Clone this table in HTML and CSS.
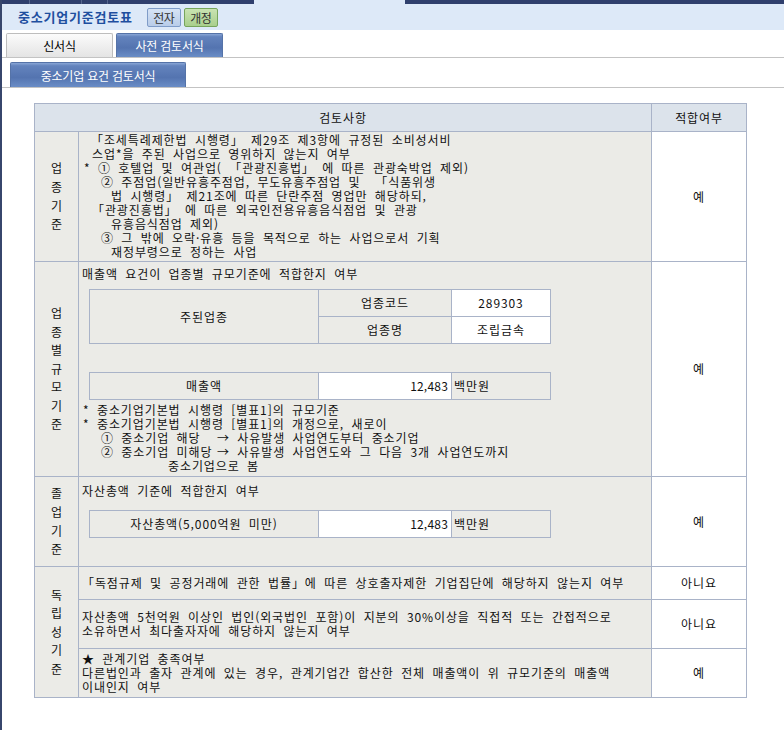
FILE: index.html
```html
<!DOCTYPE html>
<html lang="ko">
<head>
<meta charset="utf-8">
<title>중소기업기준검토표</title>
<link rel="stylesheet" href="styles.css">
</head>
<body>
<div class="frame">
  <div class="topbar">
    <div class="tb-seg tb-a"></div>
    <div class="tb-seg tb-b"></div>
    <div class="tb-seg tb-c"></div>
    <div class="tb-seg tb-d"></div>
    <div class="tb-gap"></div>
    <div class="tb-seg tb-e"></div>
  </div>
  <div class="titlebar">
    <h1 class="title">중소기업기준검토표</h1>
    <span class="btn btn-blue">전자</span>
    <span class="btn btn-green">개정</span>
  </div>
  <div class="tabs tabs-main">
    <span class="tab tab-off">신서식</span>
    <span class="tab tab-on">사전 검토서식</span>
  </div>
  <div class="tabs tabs-sub">
    <span class="tab tab-on tab-wide">중소기업 요건 검토서식</span>
  </div>
  <div class="content">
    <table class="review">
      <colgroup><col class="c-label"><col class="c-body"><col class="c-result"></colgroup>
      <thead>
        <tr class="r-head"><th colspan="2">검토사항</th><th>적합여부</th></tr>
      </thead>
      <tbody>
        <tr class="r1">
          <td class="label">업<br>종<br>기<br>준</td>
          <td class="body b1">
            <div class="ln in-a">「조세특례제한법 시행령」 제29조 제3항에 규정된 소비성서비</div>
            <div class="ln in-b">스업*을 주된 사업으로 영위하지 않는지 여부</div>
            <div class="ln">* ① 호텔업 및 여관업( 「관광진흥법」 에 따른 관광숙박업 제외)</div>
            <div class="ln in-c">② 주점업(일반유흥주점업, 무도유흥주점업 및 &nbsp;「식품위생</div>
            <div class="ln in-d">법 시행령」 제21조에 따른 단란주점 영업만 해당하되,</div>
            <div class="ln in-e">「관광진흥법」 에 따른 외국인전용유흥음식점업 및 관광</div>
            <div class="ln in-d">유흥음식점업 제외)</div>
            <div class="ln in-c">③ 그 밖에 오락·유흥 등을 목적으로 하는 사업으로서 기획</div>
            <div class="ln in-d">재정부령으로 정하는 사업</div>
          </td>
          <td class="result">예</td>
        </tr>
        <tr class="r2">
          <td class="label">업<br>종<br>별<br>규<br>모<br>기<br>준</td>
          <td class="body b2">
            <div class="ln">매출액 요건이 업종별 규모기준에 적합한지 여부</div>
            <table class="inner inner-code">
              <colgroup><col class="ic-1"><col class="ic-2"><col class="ic-3"></colgroup>
              <tr>
                <td class="ik" rowspan="2">주된업종</td>
                <td class="ik">업종코드</td>
                <td class="iv">289303</td>
              </tr>
              <tr>
                <td class="ik">업종명</td>
                <td class="iv">조립금속</td>
              </tr>
            </table>
            <table class="inner inner-sales">
              <colgroup><col class="ic-1"><col class="ic-2"><col class="ic-3"></colgroup>
              <tr>
                <td class="ik">매출액</td>
                <td class="iv num">12,483</td>
                <td class="unit">백만원</td>
              </tr>
            </table>
            <div class="notes">
              <div class="ln">* 중소기업기본법 시행령 [별표1]의 규모기준</div>
              <div class="ln">* 중소기업기본법 시행령 [별표1]의 개정으로, 새로이</div>
              <div class="ln in-n"><span class="case">① 중소기업 해당</span>→ 사유발생 사업연도부터 중소기업</div>
              <div class="ln in-n"><span class="case">② 중소기업 미해당</span>→ 사유발생 사업연도와 그 다음 3개 사업연도까지</div>
              <div class="ln in-m">중소기업으로 봄</div>
            </div>
          </td>
          <td class="result">예</td>
        </tr>
        <tr class="r3">
          <td class="label">졸<br>업<br>기<br>준</td>
          <td class="body b3">
            <div class="ln">자산총액 기준에 적합한지 여부</div>
            <table class="inner inner-asset">
              <colgroup><col class="ic-1"><col class="ic-2"><col class="ic-3"></colgroup>
              <tr>
                <td class="ik">자산총액(5,000억원 미만)</td>
                <td class="iv num">12,483</td>
                <td class="unit">백만원</td>
              </tr>
            </table>
          </td>
          <td class="result">예</td>
        </tr>
        <tr class="r4a">
          <td class="label" rowspan="3">독<br>립<br>성<br>기<br>준</td>
          <td class="body mid">「독점규제 및 공정거래에 관한 법률」에 따른 상호출자제한 기업집단에 해당하지 않는지 여부</td>
          <td class="result">아니요</td>
        </tr>
        <tr class="r4b">
          <td class="body mid">자산총액 5천억원 이상인 법인(외국법인 포함)이 지분의 30%이상을 직접적 또는 간접적으로<br>소유하면서 최다출자자에 해당하지 않는지 여부</td>
          <td class="result">아니요</td>
        </tr>
        <tr class="r4c">
          <td class="body mid">★ 관계기업 충족여부<br>다른법인과 출자 관계에 있는 경우, 관계기업간 합산한 전체 매출액이 위 규모기준의 매출액<br>이내인지 여부</td>
          <td class="result">예</td>
        </tr>
      </tbody>
    </table>
  </div>
</div>
</body>
</html>
```

FILE: styles.css
```css
html, body {
  margin: 0;
  padding: 0;
  background: #ffffff;
}

body {
  font-family: "Noto Sans CJK KR", "Noto Sans", sans-serif;
  font-size: 12px;
  color: #111;
}

.frame {
  border-left: 2px solid #37466c;
  min-height: 730px;
  box-sizing: border-box;
}

/* top strip */
.topbar {
  display: flex;
  height: 4px;
  background: #dde9f8;
}
.tb-seg {
  background: #2f3f6d;
  height: 4px;
  border-right: 1px solid #56668e;
}
.tb-a { width: 27px; }
.tb-b { width: 51px; }
.tb-c { width: 25px; }
.tb-d { width: 146px; border-right: none; }
.tb-gap { width: 151px; }
.tb-e { flex: 1; border-right: none; }

/* title band */
.titlebar {
  display: flex;
  align-items: center;
  height: 26px;
  background: #dde9f8;
  padding-left: 16px;
}
.title {
  margin: 0 14px 0 0;
  font-size: 13px;
  font-weight: bold;
  color: #1f4f9f;
  letter-spacing: 0.8px;
  line-height: 26px;
}
.btn {
  box-sizing: border-box;
  height: 19px;
  width: 34px;
  margin-right: 3px;
  margin-top: 1px;
  display: flex;
  align-items: center;
  justify-content: center;
  font-size: 12px;
  letter-spacing: -0.5px;
  color: #333;
  border-radius: 2px;
}
.btn-blue {
  background: linear-gradient(#d6e3f5, #b9cde9);
  border: 1px solid #7f9cc8;
}
.btn-green {
  background: linear-gradient(#c9e3b2, #a9cf8c);
  border: 1px solid #77a55c;
}

/* tabs */
.tabs {
  display: flex;
  gap: 3px;
  border-bottom: 1px solid #c3c3c3;
}
.tabs-main {
  padding: 3px 0 0 4px;
}
.tabs-sub {
  padding: 4px 0 0 8px;
}
.tab {
  box-sizing: border-box;
  width: 107px;
  height: 24px;
  display: flex;
  align-items: center;
  justify-content: center;
  font-size: 12px;
  letter-spacing: -0.2px;
  border-radius: 2px 2px 0 0;
}
.tab-off {
  background: linear-gradient(#fbfbfb, #e4e4e4);
  border: 1px solid #bdbdbd;
  border-bottom: none;
  color: #000;
}
.tab-on {
  background: linear-gradient(#89a6d6 0%, #6383bd 12%, #5474b0 60%, #6a8dc6 100%);
  border: 1px solid #5573a8;
  border-bottom: none;
  color: #fff;
}
.tab-wide {
  width: 176px;
  height: 25px;
}

/* review table */
.content {
  padding: 15px 0 0 32px;
}
.review {
  border-collapse: collapse;
  table-layout: fixed;
  width: 712px;
  font-size: 12px;
  line-height: 14px;
  letter-spacing: 0.9px;
  word-spacing: 3.2px;
}
.c-label { width: 44px; }
.c-body { width: 573px; }
.c-result { width: 95px; }

.review > thead > tr > th,
.review > tbody > tr > td {
  border: 1px solid #a9b3c8;
  padding: 0;
}
.review th {
  background: #dce3eb;
  font-weight: normal;
  text-align: center;
  vertical-align: middle;
}
.r-head { height: 28px; }
.r1 { height: 130px; }
.r2 { height: 215px; }
.r3 { height: 90px; }
.r4a { height: 33px; }
.r4b { height: 49px; }
.r4c { height: 49px; }

.label {
  background: #ebebe7;
  text-align: center;
  vertical-align: middle;
  line-height: 18.6px;
  letter-spacing: 0;
}
.body {
  background: #ebebe7;
  vertical-align: top;
  padding: 0 3px !important;
  white-space: nowrap;
}
.body.mid {
  vertical-align: middle;
}
.result {
  background: #ffffff;
  text-align: center;
  vertical-align: middle;
}

.b1 { padding: 1px 3px 0 5px !important; }
.b2 { padding-top: 5px !important; }
.b3 { padding-top: 7px !important; }

.ln { white-space: pre; }
.in-a { padding-left: 7px; }
.in-b { padding-left: 8px; }
.in-c { padding-left: 17px; }
.in-d { padding-left: 27px; }
.in-e { padding-left: 8px; }
.in-n { padding-left: 18px; }
.in-m { padding-left: 85px; }
.case {
  display: inline-block;
  width: 116px;
}

/* inner tables */
.inner {
  border-collapse: collapse;
  table-layout: fixed;
  width: 461px;
  margin-left: 7px;
}
.ic-1 { width: 229px; }
.ic-2 { width: 133px; }
.ic-3 { width: 99px; }
.inner td {
  border: 1px solid #a9b3c8;
  height: 26px;
  padding: 0 3px;
  vertical-align: middle;
}
.inner .ik {
  background: #ebebe7;
  text-align: center;
}
.inner .iv {
  background: #ffffff;
  text-align: center;
}
.inner .iv.num {
  text-align: right;
  letter-spacing: 0.2px;
}
.inner .unit {
  background: #ebebe7;
  text-align: left;
  padding-left: 2px;
}
.inner-code { margin-top: 8px; }
.inner-sales { margin-top: 28px; }
.inner-asset { margin-top: 12px; }
.notes { padding-left: 1px; margin-top: 3px; }
```
